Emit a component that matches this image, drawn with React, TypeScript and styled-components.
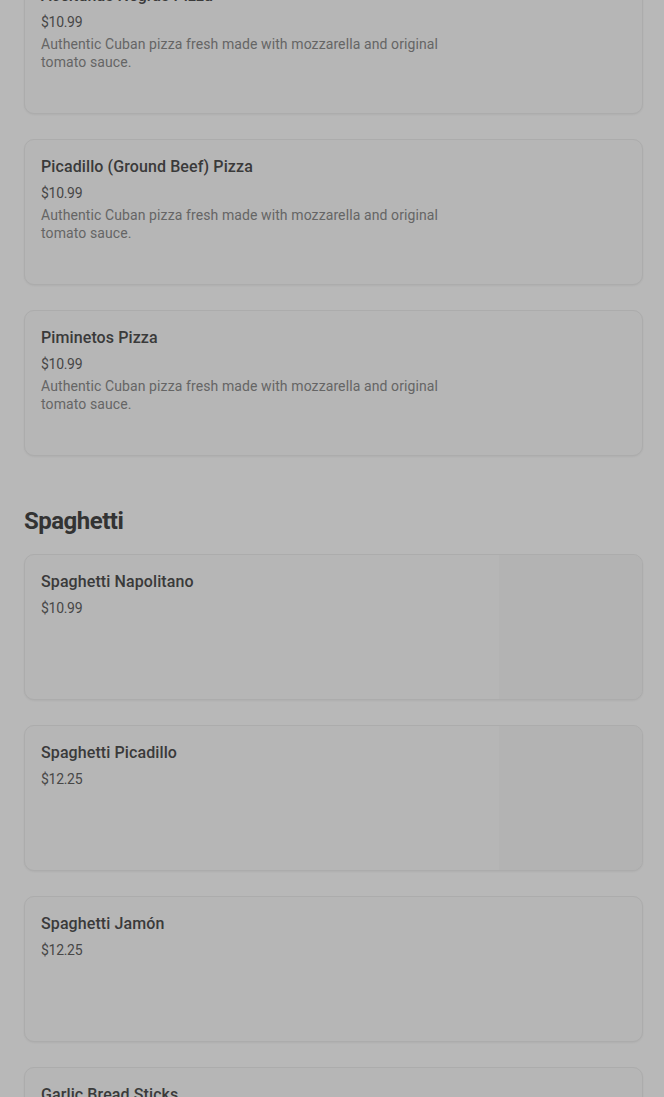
import React from 'react';
import styled, { createGlobalStyle } from 'styled-components';

type Item = {
  name: string;
  price: string;
  description?: string;
  hasImage?: boolean;
};

type Section = {
  title?: string;
  items: Item[];
};

const desc = 'Authentic Cuban pizza fresh made with mozzarella and original tomato sauce.';

const sections: Section[] = [
  {
    items: [
      { name: 'Aceitunas Negras Pizza', price: '$10.99', description: desc },
      { name: 'Picadillo (Ground Beef) Pizza', price: '$10.99', description: desc },
      { name: 'Piminetos Pizza', price: '$10.99', description: desc },
    ],
  },
  {
    title: 'Spaghetti',
    items: [
      { name: 'Spaghetti Napolitano', price: '$10.99', hasImage: true },
      { name: 'Spaghetti Picadillo', price: '$12.25', hasImage: true },
      { name: 'Spaghetti Jamón', price: '$12.25' },
      { name: 'Garlic Bread Sticks', price: '$4.99' },
    ],
  },
];

const GlobalStyle = createGlobalStyle`
  html, body {
    margin: 0;
    padding: 0;
    background: #b8b8b8;
    font-family: Roboto, 'Noto Sans', sans-serif;
    overflow: hidden;
  }
`;

const Page = styled.main`
  display: flex;
  flex-direction: column;
  gap: 49px;
  margin-top: -32px;
  padding: 0 21px 0 24px;
`;

const SectionBlock = styled.section`
  display: flex;
  flex-direction: column;
`;

const SectionTitle = styled.h2`
  margin: 0 0 17px;
  font-size: 24px;
  line-height: 32px;
  font-weight: 700;
  letter-spacing: -0.5px;
  color: #333;
`;

const CardList = styled.ul`
  list-style: none;
  margin: 0;
  padding: 0;
  display: flex;
  flex-direction: column;
  gap: 25px;
`;

const Card = styled.li`
  display: flex;
  height: 146px;
  box-sizing: border-box;
  border: 1px solid #acacac;
  border-radius: 10px;
  background: #b6b6b6;
  box-shadow: 0 1px 2px rgba(0, 0, 0, 0.05);
  overflow: hidden;
`;

const Info = styled.div`
  flex: 1;
  padding: 17px 16px 16px;
  display: flex;
  flex-direction: column;
`;

const Name = styled.h3`
  margin: 0;
  font-size: 16px;
  line-height: 20px;
  font-weight: 500;
  letter-spacing: 0.1px;
  color: #3a3a3a;
`;

const Price = styled.span`
  margin-top: 7px;
  font-size: 14px;
  line-height: 18px;
  letter-spacing: -0.3px;
  color: #474747;
`;

const Description = styled.p`
  margin: 4px 0 0;
  max-width: 425px;
  font-size: 14px;
  line-height: 18px;
  letter-spacing: 0.1px;
  color: #656565;
`;

const ImageSlot = styled.div`
  width: 143px;
  flex-shrink: 0;
  background: #b3b3b3;
`;

const MenuCard: React.FC<{ item: Item }> = ({ item }) => (
  <Card>
    <Info>
      <Name>{item.name}</Name>
      <Price>{item.price}</Price>
      {item.description && <Description>{item.description}</Description>}
    </Info>
    {item.hasImage && <ImageSlot />}
  </Card>
);

export default function App() {
  return (
    <>
      <GlobalStyle />
      <Page>
        {sections.map((section, i) => (
          <SectionBlock key={i}>
            {section.title && <SectionTitle>{section.title}</SectionTitle>}
            <CardList>
              {section.items.map((item) => (
                <MenuCard key={item.name} item={item} />
              ))}
            </CardList>
          </SectionBlock>
        ))}
      </Page>
    </>
  );
}
